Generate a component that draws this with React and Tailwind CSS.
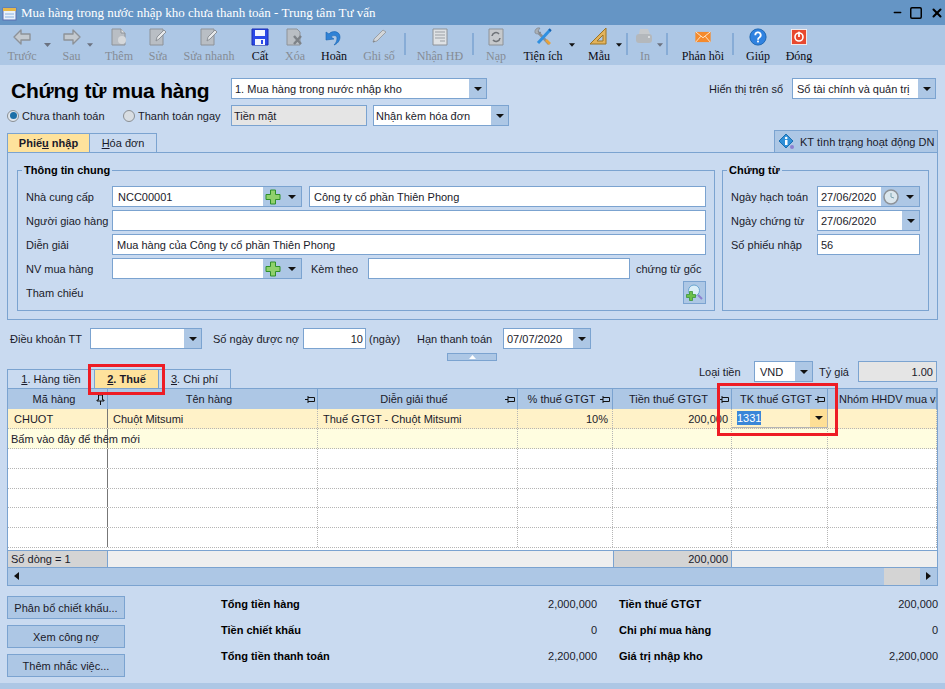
import React from 'react';
import { Minus, Square, X } from 'lucide-react';

const Caret = () => (
  <svg width="8" height="4" viewBox="0 0 8 4" className="shrink-0">
    <path d="M0 0H8L4 4Z" fill="#111" />
  </svg>
);

const ArrowBack = () => (
  <svg width="20" height="18" viewBox="0 0 20 18">
    <path d="M9 2 2 9l7 7v-4h9V6H9Z" fill="#c3c9cf" stroke="#8d9298" strokeWidth="1.4" strokeLinejoin="round" />
  </svg>
);
const ArrowForward = () => (
  <svg width="20" height="18" viewBox="0 0 20 18">
    <path d="M11 2l7 7-7 7v-4H2V6h9Z" fill="#c3c9cf" stroke="#8d9298" strokeWidth="1.4" strokeLinejoin="round" />
  </svg>
);
const DocPlus = () => (
  <svg width="20" height="18" viewBox="0 0 20 18">
    <path d="M3 1h9l4 4v12H3Z" fill="#b9bec4" stroke="#8d9298" />
    <path d="M12 1v4h4" fill="#dfe2e5" stroke="#8d9298" />
    <circle cx="13" cy="12" r="4" fill="#d5d8db" />
  </svg>
);
const DocEdit = () => (
  <svg width="20" height="18" viewBox="0 0 20 18">
    <path d="M2 1h13v16H2Z" fill="#b9bec4" stroke="#8d9298" />
    <path d="M8 13l1-4 7-7 2 2-7 7Z" fill="#e6e8ea" stroke="#8d9298" />
  </svg>
);
const Floppy = () => (
  <svg width="18" height="18" viewBox="0 0 18 18">
    <path d="M1 1h16v16H1Z" fill="#2a49e8" stroke="#1b2fb0" />
    <rect x="4" y="2" width="10" height="6" fill="#f3f6ff" />
    <rect x="4" y="11" width="10" height="6" fill="#f3f6ff" />
    <rect x="10" y="12" width="2" height="4" fill="#2a49e8" />
  </svg>
);
const DocDelete = () => (
  <svg width="20" height="18" viewBox="0 0 20 18">
    <path d="M2 1h10l3 3v13H2Z" fill="#b9bec4" stroke="#8d9298" />
    <path d="M9 8l7 8M16 8l-7 8" stroke="#7d8288" strokeWidth="2.4" />
  </svg>
);
const Undo = () => (
  <svg width="20" height="20" viewBox="0 0 20 20">
    <path d="M5 7c3-4 11-3 11 3 0 4-3 7-6 8 2-2 3-4 3-7 0-3-4-3-6-1l3 2-8 1 0-8Z" fill="#2f82d6" stroke="#1763b0" strokeWidth="0.6" />
  </svg>
);
const Pencil = () => (
  <svg width="20" height="18" viewBox="0 0 20 18">
    <path d="M4 14l1-3L14 2l3 2-9 9Z" fill="#d3d6d9" stroke="#9a9fa5" />
    <path d="M4 14l2-1" stroke="#7d8288" />
  </svg>
);
const Invoice = () => (
  <svg width="18" height="18" viewBox="0 0 18 18">
    <path d="M2 1h14v16H2Z" fill="#dfe2e5" stroke="#8d9298" />
    <path d="M4 4h10M4 7h10M4 10h10M9 13h5" stroke="#9a9fa5" />
  </svg>
);
const Reload = () => (
  <svg width="18" height="18" viewBox="0 0 18 18">
    <path d="M2 1h14v16H2Z" fill="#c6c9cc" stroke="#8d9298" />
    <path d="M5 8a4 4 0 0 1 7-2M13 10a4 4 0 0 1-7 2" fill="none" stroke="#6f7378" strokeWidth="1.6" />
  </svg>
);
const Tools = () => (
  <svg width="20" height="20" viewBox="0 0 20 20">
    <path d="M3 3l13 14" stroke="#8a8f94" strokeWidth="2.6" />
    <path d="M2 6a4 4 0 0 1 5-5L5 4l1 2 2-1a4 4 0 0 1-6 1Z" fill="#aab0b6" stroke="#6f7378" strokeWidth="0.5" />
    <path d="M17 3 5 16" stroke="#2f90e0" strokeWidth="3" />
    <path d="M16 2l2 2" stroke="#1763b0" strokeWidth="2" />
    <path d="M13 13l4 4" stroke="#e8a23a" strokeWidth="2.6" />
  </svg>
);
const Ruler = () => (
  <svg width="20" height="20" viewBox="0 0 20 20">
    <path d="M17 1v16H1Z" fill="#e3b35c" stroke="#9c7424" />
    <path d="M14 8v6H8Z" fill="#adc7e5" stroke="#9c7424" />
  </svg>
);
const Printer = () => (
  <svg width="20" height="18" viewBox="0 0 20 18">
    <path d="M5 1h8l2 5H4Z" fill="#c6c9cc" />
    <rect x="1" y="6" width="16" height="9" rx="3" fill="#b4b8bc" />
    <circle cx="14" cy="9" r="1" fill="#e6e8ea" />
  </svg>
);
const Envelope = () => (
  <svg width="16" height="12" viewBox="0 0 22 16">
    <rect x="0.5" y="1" width="21" height="14" fill="#f58a2c" />
    <path d="M1 1l10 8 10-8M1 15l7-8M21 15l-7-8" fill="none" stroke="#fff1dc" strokeWidth="1.2" />
  </svg>
);
const Help = () => (
  <svg width="18" height="18" viewBox="0 0 20 20">
    <circle cx="10" cy="10" r="9" fill="#2f82e0" stroke="#1763b0" />
    <path d="M7 8a3 3 0 1 1 4.5 2.5C10.5 11 10 11.5 10 13" fill="none" stroke="#fff" strokeWidth="2" />
    <rect x="9" y="14" width="2" height="2" fill="#fff" />
  </svg>
);
const PowerOff = () => (
  <svg width="16" height="16" viewBox="0 0 18 18">
    <rect x="0.5" y="0.5" width="17" height="17" fill="#e8482e" stroke="#f4f4f4" />
    <circle cx="9" cy="9" r="4.5" fill="none" stroke="#fff" strokeWidth="1.8" />
    <rect x="8" y="3" width="2" height="6" fill="#fff" />
  </svg>
);

const Plus = () => (
  <svg width="16" height="16" viewBox="0 0 16 16" className="shrink-0">
    <path d="M5.5 1h5v4.5H15v5h-4.5V15h-5v-4.5H1v-5h4.5Z" fill="#8fd16b" stroke="#2f8f2a" />
  </svg>
);
const Clock = () => (
  <svg width="16" height="16" viewBox="0 0 16 16" className="shrink-0">
    <circle cx="8" cy="8" r="7" fill="#dbe7ee" stroke="#8d9298" strokeWidth="1.5" />
    <path d="M8 4v4l3 1" fill="none" stroke="#7ba3b0" />
  </svg>
);
const InfoBadge = () => (
  <svg width="18" height="18" viewBox="0 0 18 18" className="shrink-0">
    <path d="M8 1l7 7-7 7-7-7Z" fill="#2f90d8" stroke="#1c6fb0" />
    <rect x="7" y="7" width="2.5" height="5" fill="#fff" />
    <circle cx="8.2" cy="5" r="1.3" fill="#fff" />
    <circle cx="14" cy="14" r="2" fill="#8c7fd0" />
  </svg>
);
const SearchPlus = () => (
  <svg width="18" height="18" viewBox="0 0 18 18">
    <circle cx="8" cy="6.5" r="5.5" fill="#dbeef8" stroke="#6aa5d0" />
    <path d="M12 11l4 4" stroke="#8c7fd0" strokeWidth="2" />
    <path d="M3.5 7.5h3v3h3v3h-3v3h-3v-3h-3v-3h3Z" fill="#6cc04a" stroke="#2f8f2a" strokeWidth="0.7" />
  </svg>
);
const Pin = ({ vertical }) => (
  <svg width="11" height="11" viewBox="0 0 11 11" className="shrink-0">
    {vertical
      ? <path d="M3.5 1h4v5h1.5v1H2V6h1.5ZM5.5 7v4" fill="none" stroke="#111" />
      : <path d="M0 5.5h3M3 2v7M3 3.5h6.5v4H3" fill="none" stroke="#111" />}
  </svg>
);

const ToolItem = ({ className, label, icon, on }) => (
  <div className={`flex flex-col items-center shrink-0 ${className}`}>
    <div className="h-[22px] flex items-center justify-center">{icon}</div>
    <span className={`text-[12px] leading-[16px] whitespace-nowrap [font-family:Liberation_Serif,serif] ${on ? 'text-[#0c0c14]' : 'text-[#858c95]'}`}>
      {label}
    </span>
  </div>
);
const ToolCaret = ({ className, dark }) => (
  <div className={`shrink-0 flex self-start mt-[18px] justify-center ${className}`}>
    <svg width="7" height="4" viewBox="0 0 7 4"><path d="M0 0H7L3.5 4Z" fill={dark ? '#111' : '#6b7280'} /></svg>
  </div>
);
const ToolSep = ({ className }) => <div className={`shrink-0 w-[2px] h-[22px] self-start mt-[8px] bg-[#87acd6] ${className}`} />;

const Field = ({ className = '', children, gray, right }) => (
  <div className={`h-[21px] border border-[#7ba3d0] flex items-center shrink-0 overflow-hidden ${gray ? 'bg-[#e5e5e5]' : 'bg-white'} ${right ? 'justify-end' : ''} ${className}`}>
    {children}
  </div>
);
const DropBtn = () => (
  <div className="w-[17px] h-full bg-[#adc7e5] flex items-center justify-center shrink-0 ml-auto">
    <Caret />
  </div>
);
// the wider button: an icon on the left, then the drop-down arrow
const IconDropBtn = ({ children }) => (
  <div className="w-[38px] h-full bg-[#adc7e5] flex items-center pl-[2px] gap-[7px] shrink-0 ml-auto">
    {children}
    <Caret />
  </div>
);

const columns = ['w-[100px]', 'w-[210px]', 'w-[200px]', 'w-[95px]', 'w-[119px]', 'w-[96px]', 'w-[109px]'];

const Cell = ({ i, className = '', children }) => (
  <div className={`${columns[i]} shrink-0 h-full flex items-center border-r border-dotted border-[#b5b5b5] ${i === 0 ? 'border-r-[#777] border-solid' : ''} ${className}`}>
    {children}
  </div>
);

const BlankRow = () => (
  <div className="flex h-[20px] bg-white border-b border-dotted border-[#b5b5b5]">
    {columns.map((c, i) => <Cell key={c} i={i} />)}
  </div>
);

const Head = ({ i, label, vertical, pin = true }) => (
  <div className={`${columns[i]} shrink-0 h-full flex items-center border-r border-[#7ba3d0] pr-[1px] overflow-hidden ${pin ? 'pl-[5px]' : 'pl-[11px]'}`}>
    <span className={`flex-1 whitespace-nowrap ${pin ? 'text-center' : ''}`}>{label}</span>
    {pin && <Pin vertical={vertical} />}
  </div>
);

const Tab = ({ className, active, children }) => (
  <div className={`h-[19px] flex items-center justify-center shrink-0 border-t border-r border-[#7ba3d0] ${active ? 'bg-[#fee29c] font-bold' : ''} ${className}`}>
    {children}
  </div>
);

const SideButton = ({ children }) => (
  <button className="w-[118px] h-[23px] bg-[#adc7e5] border border-[#7ba3d0] text-[11px] text-[#1a1a2a]">{children}</button>
);

const Radio = ({ on }) => (
  <span className={`w-[12px] h-[12px] rounded-full border border-[#8a8f94] flex items-center justify-center shrink-0 ${on ? 'bg-[#dfe6ee]' : 'bg-[#d8dde2]'}`}>
    {on && <span className="w-[7px] h-[7px] rounded-full bg-[#1c6fa8]" />}
  </span>
);

export default function App() {
  return (
    <div className="relative w-[945px] h-[689px] flex flex-col overflow-hidden bg-[#c9daf0] text-[11px] leading-[16px] text-[#1a1a2a] [font-family:Liberation_Sans,Arial,sans-serif]">
      {/* Title bar */}
      <div className="h-[25px] bg-[#6595c5] flex items-center pl-[2px] shrink-0">
        <svg width="16" height="16" viewBox="0 0 16 16" className="shrink-0">
          <rect x="1" y="3" width="13" height="12" fill="#e9f1fb" stroke="#5a6fb0" />
          <rect x="1" y="3" width="13" height="3" fill="#e6b84a" />
          <path d="M3 9h9M3 12h9" stroke="#8ab0de" />
        </svg>
        <span className="ml-[3px] text-[13px] text-white [font-family:Liberation_Serif,serif] whitespace-nowrap">
          Mua hàng trong nước nhập kho chưa thanh toán - Trung tâm Tư vấn
        </span>
        <div className="ml-auto flex items-center pr-[1px] text-black">
          <Minus size={11} strokeWidth={3} />
          <Square size={14} strokeWidth={2.5} className="ml-[6px]" />
          <X size={14} strokeWidth={3.5} className="ml-[7px]" />
        </div>
      </div>

      {/* Toolbar */}
      <div className="h-[40px] bg-[#adc7e5] flex items-end pl-[6px] pb-[1px] shrink-0 relative">
        <ToolItem className="w-[32px]" label="Trước" icon={<ArrowBack />} />
        <ToolCaret className="w-[18px]" />
        <ToolItem className="w-[31px]" label="Sau" icon={<ArrowForward />} />
        <ToolCaret className="w-[6px]" />
        <ToolItem className="w-[52px]" label="Thêm" icon={<DocPlus />} />
        <ToolItem className="w-[26px]" label="Sửa" icon={<DocEdit />} />
        <ToolItem className="w-[76px]" label="Sửa nhanh" icon={<DocEdit />} />
        <ToolItem className="w-[26px]" label="Cất" icon={<Floppy />} on />
        <ToolItem className="w-[44px]" label="Xóa" icon={<DocDelete />} />
        <ToolItem className="w-[34px]" label="Hoãn" icon={<Undo />} on />
        <ToolItem className="ml-[7px] w-[42px]" label="Ghi số" icon={<Pencil />} />
        <ToolSep className="ml-[4px]" />
        <ToolItem className="ml-[10px] w-[48px]" label="Nhận HĐ" icon={<Invoice />} />
        <ToolSep className="ml-[8px]" />
        <ToolItem className="ml-[8px] w-[28px]" label="Nạp" icon={<Reload />} />
        <ToolItem className="ml-[10px] w-[46px]" label="Tiện ích" icon={<Tools />} on />
        <ToolCaret className="ml-[3px] w-[6px]" dark />
        <ToolItem className="ml-[10px] w-[28px]" label="Mẫu" icon={<Ruler />} on />
        <ToolCaret className="ml-[3px] w-[6px]" dark />
        <ToolSep className="ml-[4px]" />
        <ToolItem className="ml-[7px] w-[20px]" label="In" icon={<Printer />} />
        <ToolCaret className="ml-[2px] w-[6px]" />
        <ToolSep className="ml-[3px]" />
        <ToolItem className="ml-[12px] w-[46px]" label="Phản hồi" icon={<Envelope />} on />
        <ToolSep className="ml-[6px]" />
        <ToolItem className="ml-[8px] w-[32px]" label="Giúp" icon={<Help />} on />
        <ToolItem className="ml-[9px] w-[32px]" label="Đóng" icon={<PowerOff />} on />
      </div>

      {/* Title row */}
      <div className="flex items-center h-[21px] mt-[13px] pl-[11px] pr-[9px] shrink-0">
        <h1 className="w-[220px] shrink-0 pt-[3px] text-[21px] tracking-[-0.2px] leading-none font-bold text-black whitespace-nowrap">Chứng từ mua hàng</h1>
        <Field className="w-[256px] pl-[3px]">
          <span>1. Mua hàng trong nước nhập kho</span>
          <DropBtn />
        </Field>
        <span className="ml-auto mr-[9px] whitespace-nowrap">Hiển thị trên sổ</span>
        <Field className="w-[144px] pl-[4px]">
          <span className="whitespace-nowrap">Sổ tài chính và quản trị</span>
          <DropBtn />
        </Field>
      </div>

      <div className="flex items-center h-[21px] mt-[6px] pl-[7px] shrink-0">
        <Radio on />
        <span className="ml-[3px] w-[101px] whitespace-nowrap">Chưa thanh toán</span>
        <Radio />
        <span className="ml-[3px] w-[93px] whitespace-nowrap">Thanh toán ngay</span>
        <Field gray className="w-[136px] pl-[2px]">Tiền mặt</Field>
        <Field className="ml-[6px] w-[136px] pl-[2px]">
          <span className="whitespace-nowrap">Nhận kèm hóa đơn</span>
          <DropBtn />
        </Field>
      </div>

      {/* Upper tabs */}
      <div className="flex items-end h-[22px] mt-[4px] px-[7px] shrink-0">
        <div className="flex border-l border-[#7ba3d0]">
          <Tab active className="w-[82px]"><span>Phiế<u>u</u> nhập</span></Tab>
          <Tab className="w-[67px]"><span><u>H</u>óa đơn</span></Tab>
        </div>
        <div className="ml-auto w-[164px] h-[22px] flex items-center gap-[4px] pl-[3px] bg-[#adc7e5] border border-b-0 border-[#7ba3d0] whitespace-nowrap">
          <InfoBadge />
          KT tình trạng hoạt động DN
        </div>
      </div>

      {/* Upper panel */}
      <div className="mx-[7px] h-[168px] border border-[#7ba3d0] flex pl-[9px] pt-[9px] gap-[7px] shrink-0">
        <fieldset className="w-[698px] h-[149px] border border-[#7ba3d0] px-[8px]">
          <legend className="-ml-[4px] px-[2px] font-bold text-black">Thông tin chung</legend>
          <div className="mt-[8px] flex flex-col gap-[3px]">
            <div className="flex items-center">
              <span className="w-[86px] shrink-0">Nhà cung cấp</span>
              <Field className="w-[190px] pl-[5px]">
                NCC00001
                <IconDropBtn><Plus /></IconDropBtn>
              </Field>
              <Field className="ml-[7px] w-[397px] pl-[4px]">Công ty cổ phần Thiên Phong</Field>
            </div>
            <div className="flex items-center">
              <span className="w-[86px] shrink-0">Người giao hàng</span>
              <Field className="w-[594px]" />
            </div>
            <div className="flex items-center">
              <span className="w-[86px] shrink-0">Diễn giải</span>
              <Field className="w-[594px] pl-[4px]">Mua hàng của Công ty cổ phần Thiên Phong</Field>
            </div>
            <div className="flex items-center">
              <span className="w-[86px] shrink-0">NV mua hàng</span>
              <Field className="w-[190px]">
                <IconDropBtn><Plus /></IconDropBtn>
              </Field>
              <span className="ml-[9px] w-[57px] shrink-0">Kèm theo</span>
              <Field className="w-[262px]" />
              <span className="ml-[6px] whitespace-nowrap">chứng từ gốc</span>
            </div>
            <div className="flex items-center -mt-[1px] h-[23px] w-[680px]">
              <span>Tham chiếu</span>
              <div className="ml-auto w-[23px] h-[23px] bg-[#adc7e5] border border-[#7ba3d0] flex items-center justify-center"><SearchPlus /></div>
            </div>
          </div>
        </fieldset>
        <fieldset className="w-[206px] h-[149px] border border-[#7ba3d0] px-[8px]">
          <legend className="-ml-[4px] px-[2px] font-bold text-black">Chứng từ</legend>
          <div className="mt-[8px] flex flex-col gap-[3px]">
            <div className="flex items-center">
              <span className="w-[86px] shrink-0">Ngày hạch toán</span>
              <Field className="w-[103px] pl-[3px]">
                27/06/2020
                <IconDropBtn><Clock /></IconDropBtn>
              </Field>
            </div>
            <div className="flex items-center">
              <span className="w-[86px] shrink-0">Ngày chứng từ</span>
              <Field className="w-[103px] pl-[3px]">
                27/06/2020
                <DropBtn />
              </Field>
            </div>
            <div className="flex items-center">
              <span className="w-[86px] shrink-0">Số phiếu nhập</span>
              <Field className="w-[103px] pl-[3px]">56</Field>
            </div>
          </div>
        </fieldset>
      </div>

      {/* Terms row */}
      <div className="flex items-center h-[21px] mt-[8px] pl-[10px] shrink-0">
        <span className="w-[80px] shrink-0">Điều khoản TT</span>
        <Field className="w-[112px]"><DropBtn /></Field>
        <span className="ml-[11px] w-[82px] shrink-0 whitespace-nowrap">Số ngày được nợ</span>
        <Field right className="ml-[8px] w-[63px] pr-[2px]">10</Field>
        <span className="ml-[3px] w-[31px] shrink-0">(ngày)</span>
        <span className="ml-[17px] w-[74px] shrink-0 whitespace-nowrap">Hạn thanh toán</span>
        <Field className="ml-[12px] w-[88px] pl-[3px]">
          07/07/2020
          <DropBtn />
        </Field>
      </div>

      {/* Lower tabs + currency */}
      <div className="flex h-[39px] pl-[7px] pr-[8px] shrink-0 relative">
        <div className="flex self-end border-l border-[#7ba3d0]">
          <Tab className="w-[87px]"><span><u>1</u>. Hàng tiền</span></Tab>
          <Tab active className="w-[64px]"><span><u>2</u>. Thuế</span></Tab>
          <Tab className="w-[72px]"><span><u>3</u>. Chi phí</span></Tab>
        </div>
        <div className="ml-[216px] mt-[4px] w-[50px] h-[8px] bg-[#adc7e5] border border-[#7ba3d0] flex items-center justify-center shrink-0">
          <svg width="7" height="4" viewBox="0 0 7 4"><path d="M0 4H7L3.5 0Z" fill="#fff" /></svg>
        </div>
        <div className="ml-auto mt-[12px] flex items-center self-start">
          <span className="w-[42px] whitespace-nowrap">Loại tiền</span>
          <Field className="ml-[13px] w-[59px] pl-[5px]">
            VND
            <DropBtn />
          </Field>
          <span className="ml-[6px] w-[31px] whitespace-nowrap">Tỷ giá</span>
          <Field gray right className="ml-[8px] w-[79px] pr-[3px]">1.00</Field>
        </div>
        <div className="absolute left-[88px] top-[15px] w-[77px] h-[31px] border-[3px] border-[#ee1c25] z-10" />
      </div>

      {/* Grid */}
      <div className="mx-[7px] h-[198px] border border-[#7ba3d0] flex flex-col overflow-hidden relative shrink-0">
        <div className="flex h-[20px] bg-[#adc7e5] shrink-0">
          <Head i={0} label="Mã hàng" vertical />
          <Head i={1} label="Tên hàng" />
          <Head i={2} label="Diễn giải thuế" />
          <Head i={3} label="% thuế GTGT" />
          <Head i={4} label="Tiền thuế GTGT" />
          <Head i={5} label="TK thuế GTGT" />
          <Head i={6} label="Nhóm HHDV mua vào" pin={false} />
        </div>
        <div className="flex h-[20px] bg-[#fff2c8] border-b border-dotted border-[#b5b5b5] shrink-0">
          <Cell i={0} className="pl-[6px]">CHUOT</Cell>
          <Cell i={1} className="pl-[5px]">Chuột Mitsumi</Cell>
          <Cell i={2} className="pl-[5px]">Thuế GTGT - Chuột Mitsumi</Cell>
          <Cell i={3} className="justify-end pr-[4px]">10%</Cell>
          <Cell i={4} className="justify-end pr-[3px]">200,000</Cell>
          <Cell i={5} className="pl-[5px] border-b border-[#b5b5b5] !border-solid !border-r-[#b5b5b5]">
            <span className="bg-[#3a86d8] text-white px-0 leading-[14px]">1331</span>
            <div className="ml-auto w-[17px] h-full bg-[#fedf96] flex items-center justify-center"><Caret /></div>
          </Cell>
          <Cell i={6} />
        </div>
        <div className="flex h-[20px] bg-[#fffde0] border-b border-dotted border-[#b5b5b5] shrink-0">
          <Cell i={0} className="pl-[3px] whitespace-nowrap relative">Bấm vào đây để thêm mới</Cell>
          <Cell i={1} /><Cell i={2} /><Cell i={3} /><Cell i={4} /><Cell i={5} /><Cell i={6} />
        </div>
        <BlankRow /><BlankRow /><BlankRow /><BlankRow /><BlankRow />
        <div className="h-[2px] bg-white shrink-0" />
        <div className="flex h-[17px] bg-[#efefef] border-t border-[#7ba3d0] shrink-0">
          <div className={`${columns[0]} bg-[#d4d4d4] border-r border-[#7ba3d0] pl-[3px] flex items-center shrink-0`}>Số dòng = 1</div>
          <div className={`${columns[1]} shrink-0`} />
          <div className={`${columns[2]} shrink-0`} />
          <div className={`${columns[3]} shrink-0`} />
          <div className={`${columns[4]} bg-[#d4d4d4] border-x border-[#7ba3d0] pr-[3px] flex items-center justify-end shrink-0`}>200,000</div>
        </div>
        <div className="flex items-center h-[18px] bg-[#adc7e5] border-t border-[#7ba3d0] shrink-0">
          <svg width="5" height="8" viewBox="0 0 5 8" className="ml-[6px]"><path d="M5 0V8L0 4Z" fill="#111" /></svg>
          <div className="ml-auto w-[36px] h-full bg-[#d4d4d4]" />
          <div className="w-[17px] flex justify-center">
            <svg width="5" height="8" viewBox="0 0 5 8"><path d="M0 0V8L5 4Z" fill="#111" /></svg>
          </div>
        </div>
      </div>
      <div className="absolute left-[717px] top-[383px] w-[121px] h-[53px] border-[3px] border-[#ee1c25] z-10" />

      {/* Bottom */}
      <div className="flex mt-[5px] pl-[7px] shrink-0">
        <div className="flex flex-col gap-[6px] pt-[5px] w-[118px] shrink-0">
          <SideButton>Phân bổ chiết khấu...</SideButton>
          <SideButton>Xem công nợ</SideButton>
          <SideButton>Thêm nhắc việc...</SideButton>
        </div>
        <div className="ml-[96px] grid grid-cols-[170px_206px_172px_169px] auto-rows-[26px] items-center">
          <b className="text-black">Tổng tiền hàng</b><span className="text-right">2,000,000</span>
          <b className="pl-[22px] text-black">Tiền thuế GTGT</b><span className="text-right">200,000</span>
          <b className="text-black">Tiền chiết khấu</b><span className="text-right">0</span>
          <b className="pl-[22px] text-black">Chi phí mua hàng</b><span className="text-right">0</span>
          <b className="text-black">Tổng tiền thanh toán</b><span className="text-right">2,200,000</span>
          <b className="pl-[22px] text-black">Giá trị nhập kho</b><span className="text-right">2,200,000</span>
        </div>
      </div>
      <div className="mt-auto h-[6px] bg-[#adc7e5] shrink-0" />
    </div>
  );
}
